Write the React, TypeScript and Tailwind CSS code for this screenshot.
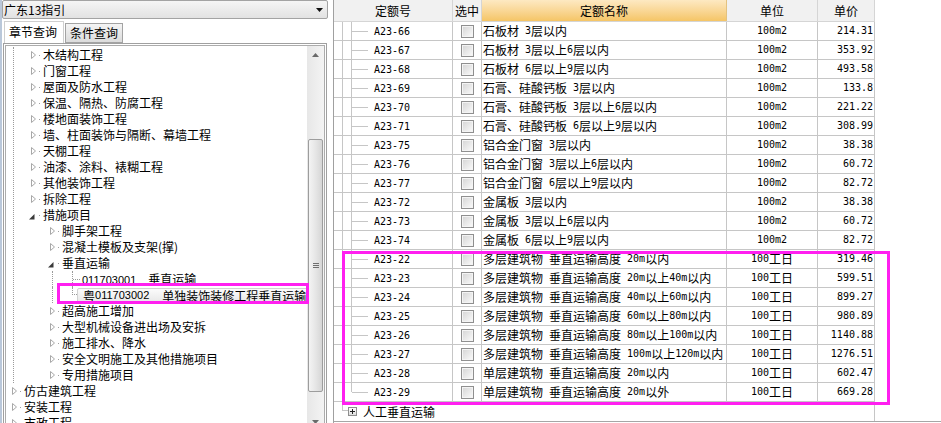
import React from 'react';

type Item = { id: string; name: string; unit: string; price: string };

const items: Item[] = [
  { id: 'A23-66', name: '石板材 3层以内', unit: '100m2', price: '214.31' },
  { id: 'A23-67', name: '石板材 3层以上6层以内', unit: '100m2', price: '353.92' },
  { id: 'A23-68', name: '石板材 6层以上9层以内', unit: '100m2', price: '493.58' },
  { id: 'A23-69', name: '石膏、硅酸钙板 3层以内', unit: '100m2', price: '133.8' },
  { id: 'A23-70', name: '石膏、硅酸钙板 3层以上6层以内', unit: '100m2', price: '221.22' },
  { id: 'A23-71', name: '石膏、硅酸钙板 6层以上9层以内', unit: '100m2', price: '308.99' },
  { id: 'A23-75', name: '铝合金门窗 3层以内', unit: '100m2', price: '38.38' },
  { id: 'A23-76', name: '铝合金门窗 3层以上6层以内', unit: '100m2', price: '60.72' },
  { id: 'A23-77', name: '铝合金门窗 6层以上9层以内', unit: '100m2', price: '82.72' },
  { id: 'A23-72', name: '金属板 3层以内', unit: '100m2', price: '38.38' },
  { id: 'A23-73', name: '金属板 3层以上6层以内', unit: '100m2', price: '60.72' },
  { id: 'A23-74', name: '金属板 6层以上9层以内', unit: '100m2', price: '82.72' },
  { id: 'A23-22', name: '多层建筑物 垂直运输高度 20m以内', unit: '100工日', price: '319.46' },
  { id: 'A23-23', name: '多层建筑物 垂直运输高度 20m以上40m以内', unit: '100工日', price: '599.51' },
  { id: 'A23-24', name: '多层建筑物 垂直运输高度 40m以上60m以内', unit: '100工日', price: '899.27' },
  { id: 'A23-25', name: '多层建筑物 垂直运输高度 60m以上80m以内', unit: '100工日', price: '980.89' },
  { id: 'A23-26', name: '多层建筑物 垂直运输高度 80m以上100m以内', unit: '100工日', price: '1140.88' },
  { id: 'A23-27', name: '多层建筑物 垂直运输高度 100m以上120m以内', unit: '100工日', price: '1276.51' },
  { id: 'A23-28', name: '单层建筑物 垂直运输高度 20m以内', unit: '100工日', price: '602.47' },
  { id: 'A23-29', name: '单层建筑物 垂直运输高度 20m以外', unit: '100工日', price: '669.28' },
];

const asciiRun = /^[\x20-\x7e]+$/;

// half-width runs in a 6px-wide mono, CJK stays 12px
function Mixed({ text }: { text: string }) {
  return (
    <>
      {text
        .split(/([\x20-\x7e]+)/)
        .filter(Boolean)
        .map((part, i) =>
          asciiRun.test(part) ? (
            <span key={i} className="whitespace-pre font-['DejaVu_Sans_Mono',monospace] text-[10px]">
              {part}
            </span>
          ) : (
            <span key={i}>{part}</span>
          ),
        )}
    </>
  );
}

function Expander({ open }: { open?: boolean }) {
  return (
    <svg width="8" height="16" viewBox="0 0 8 16" className="shrink-0">
      {open ? (
        <polygon points="5.5,7 5.5,12.5 0,12.5" fill="#3a3a3a" />
      ) : (
        <polygon points="2.5,4.5 6.5,8 2.5,11.5" fill="#fff" stroke="#a8a8a8" strokeWidth="1" />
      )}
    </svg>
  );
}

function Node({ pad, label, open }: { pad: string; label: string; open?: boolean }) {
  return (
    <div className={`flex h-4 items-center ${pad}`}>
      <Expander open={open} />
      <span className="ml-[2px] h-px w-px shrink-0 bg-[#a0a0a0]" />
      <span className="ml-[3px] whitespace-nowrap">{label}</span>
    </div>
  );
}

const level1 = [
  '木结构工程',
  '门窗工程',
  '屋面及防水工程',
  '保温、隔热、防腐工程',
  '楼地面装饰工程',
  '墙、柱面装饰与隔断、幕墙工程',
  '天棚工程',
  '油漆、涂料、裱糊工程',
  '其他装饰工程',
  '拆除工程',
];

const level2After = ['超高施工增加', '大型机械设备进出场及安拆', '施工排水、降水', '安全文明施工及其他措施项目', '专用措施项目'];

function Tree() {
  return (
    <div className="min-w-0 flex-1 overflow-hidden pt-px">
      <div className="ml-[7px] border-l border-dotted border-[#9a9a9a]">
        {level1.map((t) => (
          <Node key={t} pad="pl-[15px]" label={t} />
        ))}
        <Node pad="pl-[15px]" label="措施项目" open />
        <Node pad="pl-[34px]" label="脚手架工程" />
        <Node pad="pl-[34px]" label="混凝土模板及支架(撑)" />
        <Node pad="pl-[34px]" label="垂直运输" open />
        <div className="flex h-4 items-center pl-[38px]">
          <span className="w-[20px] shrink-0 self-stretch border-l border-dotted border-[#9a9a9a]" />
          <span className="flex w-[8px] shrink-0 items-center self-stretch border-l border-dotted border-[#9a9a9a]">
            <span className="h-0 w-full border-t border-dotted border-[#9a9a9a]" />
          </span>
          <span className="ml-[2px] whitespace-nowrap">
            <span className="font-['Liberation_Sans',sans-serif] text-[11px]">011703001</span>
            <span className="ml-[12px]">垂直运输</span>
          </span>
        </div>
        <div className="flex h-4 items-center pl-[38px]">
          <span className="w-[20px] shrink-0 self-stretch border-l border-dotted border-[#9a9a9a]" />
          <span className="h-[8px] w-[5px] shrink-0 self-start border-b border-l border-dotted border-[#9a9a9a]" />
          <span className="flex h-[15px] items-center whitespace-nowrap rounded-[2px] border border-[#d2d2d2] bg-gradient-to-b from-[#fbfbfb] to-[#e8e8e8] pl-[5px] pr-[2px] leading-[13px]">
            <span>粤</span>
            <span className="font-['Liberation_Sans',sans-serif] text-[11px]">011703002</span>
            <span className="ml-[13px]">单独装饰装修工程垂直运输</span>
          </span>
        </div>
        {level2After.map((t) => (
          <Node key={t} pad="pl-[34px]" label={t} />
        ))}
      </div>
      <Node pad="pl-[4px]" label="仿古建筑工程" />
      <Node pad="pl-[4px]" label="安装工程" />
      <Node pad="pl-[4px]" label="市政工程" />
    </div>
  );
}

function ScrollBar() {
  return (
    <div className="flex w-[17px] shrink-0 flex-col bg-gradient-to-r from-[#e7e7e7] to-[#f4f4f4]">
      <div className="flex h-[17px] shrink-0 items-center justify-center">
        <svg width="7" height="4" viewBox="0 0 7 4">
          <polygon points="3.5,0 7,4 0,4" fill="#6a6a6a" />
        </svg>
      </div>
      <div className="mx-px mt-[76px] flex h-[253px] shrink-0 items-center justify-center rounded-[2px] border border-[#9d9d9d] bg-gradient-to-r from-[#f4f4f4] via-[#e6e6e6] to-[#d6d6d6]">
        <div className="flex w-[6px] flex-col gap-[1px]">
          <span className="h-px bg-[#6f6f6f]" />
          <span className="h-px bg-[#6f6f6f]" />
          <span className="h-px bg-[#6f6f6f]" />
        </div>
      </div>
      <div className="mt-auto flex h-[17px] shrink-0 items-center justify-center">
        <svg width="7" height="4" viewBox="0 0 7 4">
          <polygon points="0,0 7,0 3.5,4" fill="#6a6a6a" />
        </svg>
      </div>
    </div>
  );
}

function LeftPanel() {
  return (
    <div className="flex w-[326px] shrink-0 flex-col bg-white">
      <div className="flex h-[19px] shrink-0 items-center justify-between rounded-[2px] border border-[#a3a3a3] bg-gradient-to-b from-[#f5f5f5] to-[#e2e2e2] pl-[1px] pr-[4px]">
        <span className="leading-4">广东13指引</span>
        <svg width="7" height="4" viewBox="0 0 7 4">
          <polygon points="0,0 7,0 3.5,4" fill="#111" />
        </svg>
      </div>
      <div className="flex h-[24px] shrink-0 items-end pl-[2px]">
        <div className="h-[22px] w-[60px] border-l border-r border-t border-[#cfcfcf] bg-white pl-[4px] leading-[19px]">
          章节查询
        </div>
        <div className="ml-px h-[20px] w-[58px] border border-[#a3a3a3] bg-gradient-to-b from-[#f4f4f4] to-[#dcdcdc] text-center leading-[18px]">
          条件查询
        </div>
      </div>
      <div className="ml-px h-[390px] w-[324px] shrink-0 border border-[#a0a0a0] bg-white p-px">
        <div className="flex h-full border border-[#acacac]">
          <Tree />
          <ScrollBar />
        </div>
      </div>
    </div>
  );
}

function Row({ item, last }: { item: Item; last: boolean }) {
  return (
    <div className="flex h-[19px] border-b border-[#c6c6c6]">
      <div className="flex w-[119px] shrink-0 items-center border-r border-[#c6c6c6] pl-[8px]">
        <span className="w-px shrink-0 self-stretch bg-[#c6c6c6]" />
        <span className={last ? 'ml-[8px] h-[9px] w-px shrink-0 self-start bg-[#c6c6c6]' : 'ml-[8px] w-px shrink-0 self-stretch bg-[#c6c6c6]'} />
        <span className="h-px w-[16px] shrink-0 bg-[#c6c6c6]" />
        <span className="ml-[6px] whitespace-nowrap">
          <Mixed text={item.id} />
        </span>
      </div>
      <div className="flex w-[29px] shrink-0 items-center justify-center border-r border-[#c6c6c6]">
        <span className="h-[13px] w-[13px] border border-[#8f8f8f] bg-gradient-to-br from-[#d4d4d4] to-[#fbfbfb] shadow-[inset_0_0_0_1px_#f4f4f4]" />
      </div>
      <div className="flex w-[245px] shrink-0 items-center overflow-hidden whitespace-nowrap border-r border-[#c6c6c6] pl-[1px]">
        <Mixed text={item.name} />
      </div>
      <div className="flex w-[91px] shrink-0 items-center justify-center whitespace-nowrap border-r border-[#c6c6c6]">
        <Mixed text={item.unit} />
      </div>
      <div className="flex w-[57px] shrink-0 items-center justify-end border-r border-[#c6c6c6] pr-px">
        <Mixed text={item.price} />
      </div>
    </div>
  );
}

function RightPanel() {
  return (
    <div className="min-w-0 flex-1 border-l border-[#a0a0a0] bg-white">
      <div className="h-[422px] border-b border-[#a6a6a6]">
        <div className="w-[541px]">
          <div className="flex h-[22px] border-b border-[#d5d5d5]">
            <div className="flex w-[119px] items-center justify-center border-r border-[#d5d5d5] bg-[#f1f1f1]">定额号</div>
            <div className="flex w-[29px] items-center justify-center border-r border-[#d5d5d5] bg-[#f1f1f1]">选中</div>
            <div className="flex w-[245px] items-center justify-center border-r border-[#e3c27f] bg-gradient-to-b from-[#fde9c2] to-[#f5c565]">定额名称</div>
            <div className="flex w-[91px] items-center justify-center border-r border-[#d5d5d5] bg-[#f1f1f1]">单位</div>
            <div className="flex w-[57px] items-center justify-center border-r border-[#d5d5d5] bg-[#f1f1f1]">单价</div>
          </div>
          {items.map((it, i) => (
            <Row key={it.id} item={it} last={i === items.length - 1} />
          ))}
          <div className="flex h-[19px] items-center border-r border-[#c6c6c6] pl-[8px]">
            <span className="h-[9px] w-[6px] shrink-0 self-start border-b border-l border-[#c6c6c6]" />
            <span className="flex h-[9px] w-[9px] shrink-0 items-center justify-center border border-[#8e8e8e] bg-gradient-to-b from-white to-[#dedede]">
              <svg width="5" height="5" viewBox="0 0 5 5">
                <rect x="0" y="2" width="5" height="1" fill="#222" />
                <rect x="2" y="0" width="1" height="5" fill="#222" />
              </svg>
            </span>
            <span className="ml-[6px] whitespace-nowrap">人工垂直运输</span>
          </div>
        </div>
      </div>
    </div>
  );
}

export default function App() {
  return (
    <div className="relative flex h-[423px] w-[941px] overflow-hidden bg-white font-['Noto_Sans_CJK_SC',sans-serif] text-[12px] leading-4 text-black">
      <div className="w-[2px] shrink-0 bg-[#bac8da]" />
      <LeftPanel />
      <div className="w-[5px] shrink-0 bg-white" />
      <RightPanel />
      {/* annotation boxes drawn over the screenshot */}
      <div className="pointer-events-none absolute left-[57px] top-[283px] h-[21px] w-[252px] border-[3px] border-[#ff1ff0]" />
      <div className="pointer-events-none absolute left-[342px] top-[251px] h-[154px] w-[548px] border-[3px] border-[#ff1ff0]" />
    </div>
  );
}
